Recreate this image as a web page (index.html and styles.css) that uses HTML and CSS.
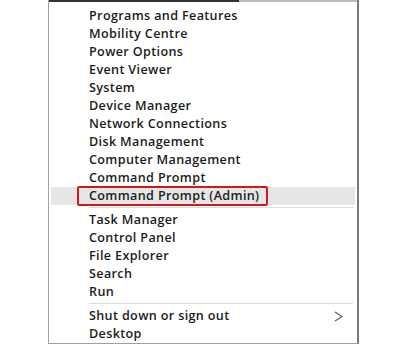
FILE: index.html
```html
<!DOCTYPE html>
<html lang="en">
<head>
    <meta charset="UTF-8">
    <title>Quick Link Menu</title>
    <link rel="stylesheet" href="styles.css">
</head>
<body>
    <div class="menu">
        <div class="menu-top"></div>
        <div class="group first">
            <div class="item">Programs and Features</div>
            <div class="item">Mobility Centre</div>
            <div class="item">Power Options</div>
            <div class="item">Event Viewer</div>
            <div class="item">System</div>
            <div class="item">Device Manager</div>
            <div class="item">Network Connections</div>
            <div class="item">Disk Management</div>
            <div class="item">Computer Management</div>
            <div class="item">Command Prompt</div>
            <div class="item active"><span class="marked">Command Prompt (Admin)</span></div>
        </div>
        <div class="sep"></div>
        <div class="group">
            <div class="item">Task Manager</div>
            <div class="item">Control Panel</div>
            <div class="item">File Explorer</div>
            <div class="item">Search</div>
            <div class="item">Run</div>
        </div>
        <div class="sep"></div>
        <div class="group">
            <div class="item has-sub">Shut down or sign out
                <svg class="chevron" width="9" height="11" viewBox="0 0 9 11"><path d="M1 1 L8 5.5 L1 10" fill="none" stroke="#555" stroke-width="1.1"/></svg>
            </div>
            <div class="item">Desktop</div>
        </div>
    </div>
</body>
</html>
```

FILE: styles.css
```css
body {
    margin: 0;
    background: #fff;
    font-family: "Open Sans", "Noto Sans", sans-serif;
    color: #1c1c1c;
}

.menu {
    margin-left: 48px;
    width: 308px;
    height: 343px;
    border-left: 1px solid #a0a0a0;
    border-right: 2px solid #7a7a7a;
    border-bottom: 1px solid #a0a0a0;
    background: #fff;
}

.menu-top {
    height: 2px;
    background: linear-gradient(to right, #333 0, #333 190px, #bbb 190px);
}

.group {
    padding: 0 2px;
}

.group.first {
    padding-top: 5px;
}

.item {
    height: 18px;
    line-height: 18px;
    padding-left: 38px;
    font-size: 12.6px;
    font-weight: 600;
    letter-spacing: 0.35px;
    position: relative;
}

.item.active {
    background: #e6e6e6;
    padding-left: 26px;
}

.marked {
    display: inline-block;
    height: 16px;
    line-height: 16px;
    padding: 0 7px 0 10px;
    border: 2px solid #cc1b1b;
    border-radius: 2px;
    margin-top: -1px;
}

.sep {
    height: 1px;
    background: #dcdcdc;
    margin: 2px 4px 3px 40px;
}

.chevron {
    position: absolute;
    right: 12px;
    top: 4px;
}
```
